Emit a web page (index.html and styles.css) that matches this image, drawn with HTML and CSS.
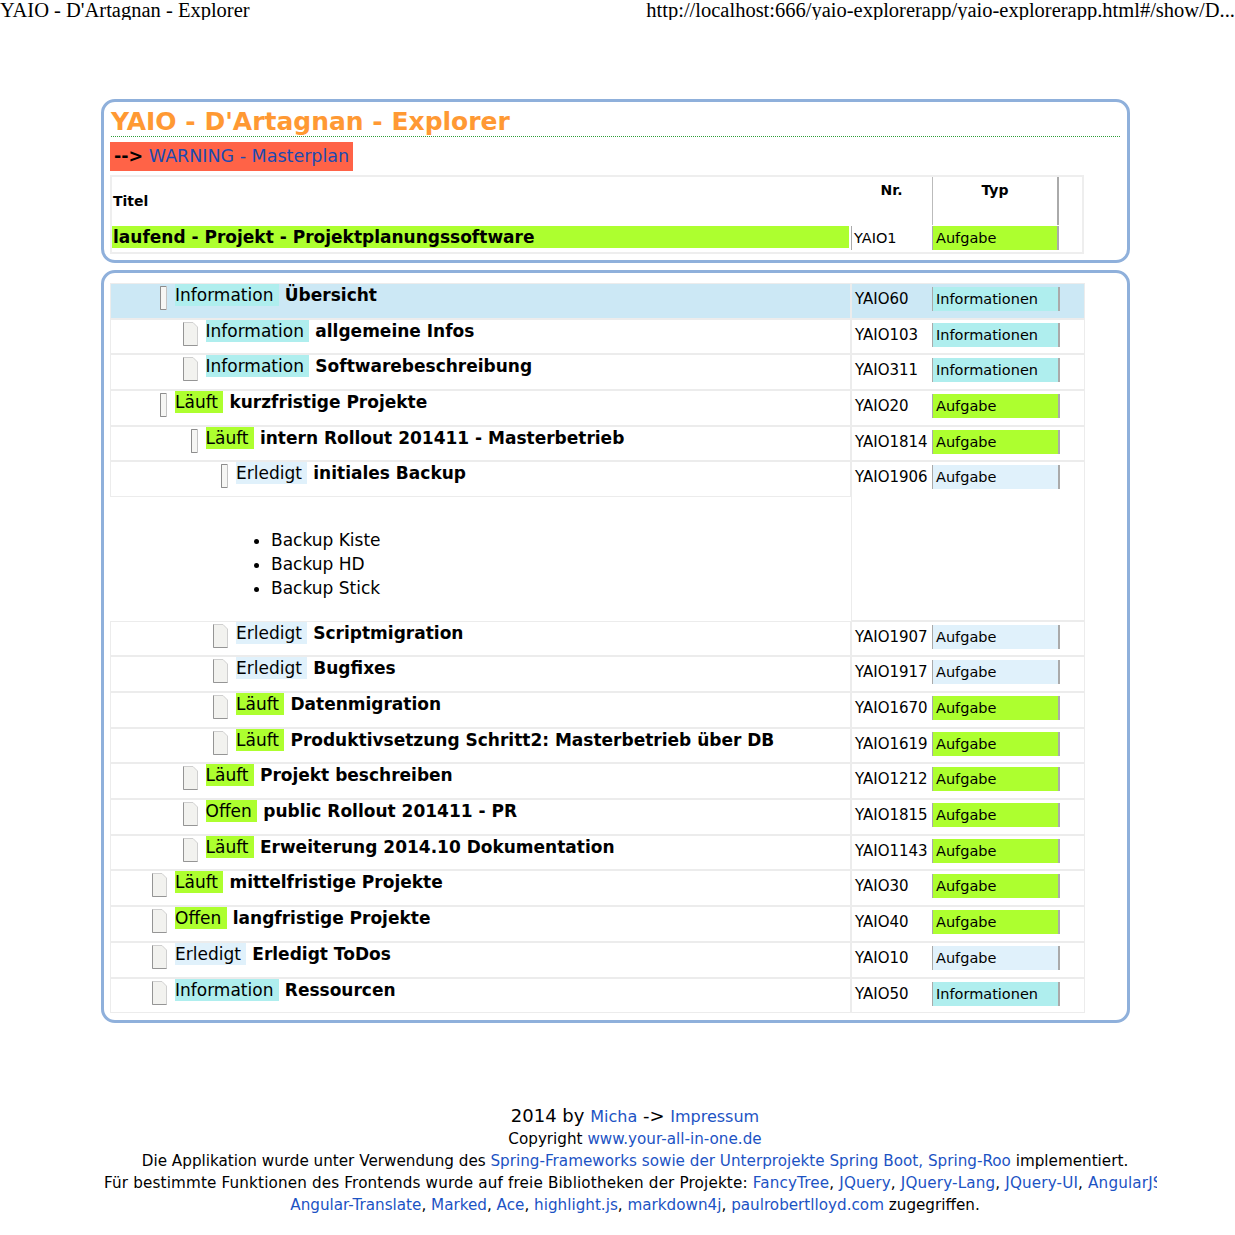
FILE: index.html
```html
<!DOCTYPE html>
<html lang="de">
<head>
<meta charset="utf-8">
<title>YAIO - D'Artagnan - Explorer</title>
<link rel="stylesheet" href="styles.css">
</head>
<body>
<div class="printhead"><span>YAIO - D'Artagnan - Explorer</span><span>http://localhost:666/yaio-explorerapp/yaio-explorerapp.html#/show/D...</span></div>

<div class="page">
  <div class="box box-head">
    <h1 class="apptitle">YAIO - D'Artagnan - Explorer</h1>
    <div class="warn"><b>--&gt;</b> <span class="warn-link">WARNING - Masterplan</span></div>
    <div class="master">
      <div class="mh">
        <div class="mh-title">Titel</div>
        <div class="mh-nr">Nr.</div>
        <div class="mh-typ">Typ</div>
      </div>
      <div class="mr">
        <div class="mr-title">laufend - Projekt - Projektplanungssoftware</div>
        <div class="mr-nr">YAIO1</div>
        <div class="mr-typ">Aufgabe</div>
      </div>
    </div>
  </div>

  <div class="box box-tree">
    <div class="row hl">
      <div class="cell-l"><div class="node l1"><span class="ico"><svg width="16" height="24" viewBox="0 0 16 24"><rect x="9.5" y="0.5" width="6" height="23" fill="#f6f6f4" stroke="#c4c4c4"/><path d="M15 0.5 H9.5 V23.5 H15" fill="none" stroke="#8d8d8d"/></svg></span><span class="st s-info">Information&nbsp;</span><b class="tt">Übersicht</b></div></div>
      <div class="cell-r"><span class="nr">YAIO60</span><span class="typ t-info">Informationen</span></div>
    </div>
    <div class="row">
      <div class="cell-l"><div class="node l2"><span class="ico"><svg width="16" height="24" viewBox="0 0 16 24"><path d="M1.5 0.5 H11 L15.5 5 V23.5 H1.5 Z" fill="#f2f2ef" stroke="#cfcfcf"/><path d="M1.5 0.5 V23.5 H15.5" fill="none" stroke="#959595"/></svg></span><span class="st s-info">Information&nbsp;</span><b class="tt">allgemeine Infos</b></div></div>
      <div class="cell-r"><span class="nr">YAIO103</span><span class="typ t-info">Informationen</span></div>
    </div>
    <div class="row">
      <div class="cell-l"><div class="node l2"><span class="ico"><svg width="16" height="24" viewBox="0 0 16 24"><path d="M1.5 0.5 H11 L15.5 5 V23.5 H1.5 Z" fill="#f2f2ef" stroke="#cfcfcf"/><path d="M1.5 0.5 V23.5 H15.5" fill="none" stroke="#959595"/></svg></span><span class="st s-info">Information&nbsp;</span><b class="tt">Softwarebeschreibung</b></div></div>
      <div class="cell-r"><span class="nr">YAIO311</span><span class="typ t-info">Informationen</span></div>
    </div>
    <div class="row">
      <div class="cell-l"><div class="node l1"><span class="ico"><svg width="16" height="24" viewBox="0 0 16 24"><rect x="9.5" y="0.5" width="6" height="23" fill="#f6f6f4" stroke="#c4c4c4"/><path d="M15 0.5 H9.5 V23.5 H15" fill="none" stroke="#8d8d8d"/></svg></span><span class="st s-run">Läuft&nbsp;</span><b class="tt">kurzfristige Projekte</b></div></div>
      <div class="cell-r"><span class="nr">YAIO20</span><span class="typ t-task">Aufgabe</span></div>
    </div>
    <div class="row">
      <div class="cell-l"><div class="node l2"><span class="ico"><svg width="16" height="24" viewBox="0 0 16 24"><rect x="9.5" y="0.5" width="6" height="23" fill="#f6f6f4" stroke="#c4c4c4"/><path d="M15 0.5 H9.5 V23.5 H15" fill="none" stroke="#8d8d8d"/></svg></span><span class="st s-run">Läuft&nbsp;</span><b class="tt">intern Rollout 201411 - Masterbetrieb</b></div></div>
      <div class="cell-r"><span class="nr">YAIO1814</span><span class="typ t-task">Aufgabe</span></div>
    </div>
    <div class="row">
      <div class="cell-l plain">
        <div class="node l3 framed"><span class="ico"><svg width="16" height="24" viewBox="0 0 16 24"><rect x="9.5" y="0.5" width="6" height="23" fill="#f6f6f4" stroke="#c4c4c4"/><path d="M15 0.5 H9.5 V23.5 H15" fill="none" stroke="#8d8d8d"/></svg></span><span class="st s-done">Erledigt&nbsp;</span><b class="tt">initiales Backup</b></div>
        <div class="desc">
          <ul>
            <li>Backup Kiste</li>
            <li>Backup HD</li>
            <li>Backup Stick</li>
          </ul>
        </div>
      </div>
      <div class="cell-r tall"><span class="nr">YAIO1906</span><span class="typ t-done">Aufgabe</span></div>
    </div>
    <div class="row">
      <div class="cell-l"><div class="node l3"><span class="ico"><svg width="16" height="24" viewBox="0 0 16 24"><path d="M1.5 0.5 H11 L15.5 5 V23.5 H1.5 Z" fill="#f2f2ef" stroke="#cfcfcf"/><path d="M1.5 0.5 V23.5 H15.5" fill="none" stroke="#959595"/></svg></span><span class="st s-done">Erledigt&nbsp;</span><b class="tt">Scriptmigration</b></div></div>
      <div class="cell-r"><span class="nr">YAIO1907</span><span class="typ t-done">Aufgabe</span></div>
    </div>
    <div class="row">
      <div class="cell-l"><div class="node l3"><span class="ico"><svg width="16" height="24" viewBox="0 0 16 24"><path d="M1.5 0.5 H11 L15.5 5 V23.5 H1.5 Z" fill="#f2f2ef" stroke="#cfcfcf"/><path d="M1.5 0.5 V23.5 H15.5" fill="none" stroke="#959595"/></svg></span><span class="st s-done">Erledigt&nbsp;</span><b class="tt">Bugfixes</b></div></div>
      <div class="cell-r"><span class="nr">YAIO1917</span><span class="typ t-done">Aufgabe</span></div>
    </div>
    <div class="row">
      <div class="cell-l"><div class="node l3"><span class="ico"><svg width="16" height="24" viewBox="0 0 16 24"><path d="M1.5 0.5 H11 L15.5 5 V23.5 H1.5 Z" fill="#f2f2ef" stroke="#cfcfcf"/><path d="M1.5 0.5 V23.5 H15.5" fill="none" stroke="#959595"/></svg></span><span class="st s-run">Läuft&nbsp;</span><b class="tt">Datenmigration</b></div></div>
      <div class="cell-r"><span class="nr">YAIO1670</span><span class="typ t-task">Aufgabe</span></div>
    </div>
    <div class="row">
      <div class="cell-l"><div class="node l3"><span class="ico"><svg width="16" height="24" viewBox="0 0 16 24"><path d="M1.5 0.5 H11 L15.5 5 V23.5 H1.5 Z" fill="#f2f2ef" stroke="#cfcfcf"/><path d="M1.5 0.5 V23.5 H15.5" fill="none" stroke="#959595"/></svg></span><span class="st s-run">Läuft&nbsp;</span><b class="tt">Produktivsetzung Schritt2: Masterbetrieb über DB</b></div></div>
      <div class="cell-r"><span class="nr">YAIO1619</span><span class="typ t-task">Aufgabe</span></div>
    </div>
    <div class="row">
      <div class="cell-l"><div class="node l2"><span class="ico"><svg width="16" height="24" viewBox="0 0 16 24"><path d="M1.5 0.5 H11 L15.5 5 V23.5 H1.5 Z" fill="#f2f2ef" stroke="#cfcfcf"/><path d="M1.5 0.5 V23.5 H15.5" fill="none" stroke="#959595"/></svg></span><span class="st s-run">Läuft&nbsp;</span><b class="tt">Projekt beschreiben</b></div></div>
      <div class="cell-r"><span class="nr">YAIO1212</span><span class="typ t-task">Aufgabe</span></div>
    </div>
    <div class="row">
      <div class="cell-l"><div class="node l2"><span class="ico"><svg width="16" height="24" viewBox="0 0 16 24"><path d="M1.5 0.5 H11 L15.5 5 V23.5 H1.5 Z" fill="#f2f2ef" stroke="#cfcfcf"/><path d="M1.5 0.5 V23.5 H15.5" fill="none" stroke="#959595"/></svg></span><span class="st s-open">Offen&nbsp;</span><b class="tt">public Rollout 201411 - PR</b></div></div>
      <div class="cell-r"><span class="nr">YAIO1815</span><span class="typ t-task">Aufgabe</span></div>
    </div>
    <div class="row">
      <div class="cell-l"><div class="node l2"><span class="ico"><svg width="16" height="24" viewBox="0 0 16 24"><path d="M1.5 0.5 H11 L15.5 5 V23.5 H1.5 Z" fill="#f2f2ef" stroke="#cfcfcf"/><path d="M1.5 0.5 V23.5 H15.5" fill="none" stroke="#959595"/></svg></span><span class="st s-run">Läuft&nbsp;</span><b class="tt">Erweiterung 2014.10 Dokumentation</b></div></div>
      <div class="cell-r"><span class="nr">YAIO1143</span><span class="typ t-task">Aufgabe</span></div>
    </div>
    <div class="row">
      <div class="cell-l"><div class="node l1"><span class="ico"><svg width="16" height="24" viewBox="0 0 16 24"><path d="M1.5 0.5 H11 L15.5 5 V23.5 H1.5 Z" fill="#f2f2ef" stroke="#cfcfcf"/><path d="M1.5 0.5 V23.5 H15.5" fill="none" stroke="#959595"/></svg></span><span class="st s-run">Läuft&nbsp;</span><b class="tt">mittelfristige Projekte</b></div></div>
      <div class="cell-r"><span class="nr">YAIO30</span><span class="typ t-task">Aufgabe</span></div>
    </div>
    <div class="row">
      <div class="cell-l"><div class="node l1"><span class="ico"><svg width="16" height="24" viewBox="0 0 16 24"><path d="M1.5 0.5 H11 L15.5 5 V23.5 H1.5 Z" fill="#f2f2ef" stroke="#cfcfcf"/><path d="M1.5 0.5 V23.5 H15.5" fill="none" stroke="#959595"/></svg></span><span class="st s-open">Offen&nbsp;</span><b class="tt">langfristige Projekte</b></div></div>
      <div class="cell-r"><span class="nr">YAIO40</span><span class="typ t-task">Aufgabe</span></div>
    </div>
    <div class="row">
      <div class="cell-l"><div class="node l1"><span class="ico"><svg width="16" height="24" viewBox="0 0 16 24"><path d="M1.5 0.5 H11 L15.5 5 V23.5 H1.5 Z" fill="#f2f2ef" stroke="#cfcfcf"/><path d="M1.5 0.5 V23.5 H15.5" fill="none" stroke="#959595"/></svg></span><span class="st s-done">Erledigt&nbsp;</span><b class="tt">Erledigt ToDos</b></div></div>
      <div class="cell-r"><span class="nr">YAIO10</span><span class="typ t-done">Aufgabe</span></div>
    </div>
    <div class="row">
      <div class="cell-l"><div class="node l1"><span class="ico"><svg width="16" height="24" viewBox="0 0 16 24"><path d="M1.5 0.5 H11 L15.5 5 V23.5 H1.5 Z" fill="#f2f2ef" stroke="#cfcfcf"/><path d="M1.5 0.5 V23.5 H15.5" fill="none" stroke="#959595"/></svg></span><span class="st s-info">Information&nbsp;</span><b class="tt">Ressourcen</b></div></div>
      <div class="cell-r"><span class="nr">YAIO50</span><span class="typ t-info">Informationen</span></div>
    </div>
  </div>
</div>

<div class="footer">
  <div class="f1">2014 by <a class="fl" href="#">Micha</a> -&gt; <a class="fl" href="#">Impressum</a></div>
  <div>Copyright <a href="#">www.your-all-in-one.de</a></div>
  <div>Die Applikation wurde unter Verwendung des <a href="#">Spring-Frameworks sowie der Unterprojekte Spring Boot, Spring-Roo</a> implementiert.</div>
  <div class="f4">Für bestimmte Funktionen des Frontends wurde auf freie Bibliotheken der Projekte: <a href="#">FancyTree</a>, <a href="#">JQuery</a>, <a href="#">JQuery-Lang</a>, <a href="#">JQuery-UI</a>, <a href="#">AngularJS</a>,</div>
  <div><a href="#">Angular-Translate</a>, <a href="#">Marked</a>, <a href="#">Ace</a>, <a href="#">highlight.js</a>, <a href="#">markdown4j</a>, <a href="#">paulrobertlloyd.com</a> zugegriffen.</div>
</div>
</body>
</html>
```
FILE: styles.css
```css
* { box-sizing: border-box; }
body {
  margin: 0;
  font-family: "DejaVu Sans", Verdana, sans-serif;
  color: #000;
  background: #fff;
}
.printhead {
  display: flex;
  justify-content: space-between;
  font-family: "Liberation Serif", "Times New Roman", serif;
  font-size: 20.5px;
  line-height: 20px;
  white-space: nowrap;
  overflow: hidden;
}
.page {
  width: 1029px;
  margin: 79px 0 0 101px;
}
.box {
  border: 3px solid #8fb0db;
  border-radius: 14px;
}
.box-head {
  padding: 6px 7px 6px 6px;
}
.apptitle {
  margin: 0 0 0 1px;
  width: 1009px;
  font-size: 25px;
  line-height: 28px;
  font-weight: bold;
  color: #ff9933;
  border-bottom: 1px dotted #2f9e3a;
}
.warn {
  display: inline-block;
  margin-top: 5px;
  background: #ff6347;
  font-size: 17.5px;
  line-height: 29px;
  padding: 0 4px;
}
.warn-link { color: #1b4ab0; }
.master {
  margin-top: 4px;
  width: 974px;
  border: 2px solid #eeeeee;
  padding-bottom: 2px;
}
.mh { display: flex; height: 48px; }
.mh-title {
  width: 739px;
  font-weight: bold;
  font-size: 14px;
  display: flex;
  align-items: center;
  padding-left: 1px;
}
.mh-nr {
  width: 81px;
  text-align: center;
  font-weight: bold;
  font-size: 14px;
  padding-top: 5px;
}
.mh-typ {
  width: 127px;
  border-left: 1px solid #bbbbbb;
  border-right: 2px solid #aaaaaa;
  text-align: center;
  font-weight: bold;
  font-size: 14px;
  padding-top: 5px;
}
.mr { display: flex; height: 24px; margin-top: 1px; }
.mr-title {
  width: 737px;
  margin-right: 2px;
  height: 22px;
  background: #adff2f;
  font-weight: bold;
  font-size: 17px;
  line-height: 22px;
  padding-left: 1px;
}
.mr-nr {
  width: 81px;
  border-left: 1px solid #aaaaaa;
  font-size: 14.5px;
  line-height: 24px;
  padding-left: 2px;
}
.mr-typ {
  width: 127px;
  background: #adff2f;
  border-left: 1px solid #aaaaaa;
  border-right: 2px solid #aaaaaa;
  font-size: 14.5px;
  line-height: 24px;
  padding-left: 3px;
}
.box-tree {
  margin-top: 7px;
  padding: 10px 0 7px 6px;
}
.row { display: flex; }
.cell-l {
  width: 741px;
  height: 35.7px;
  border: 1px solid #ececec;
}
.cell-l.plain { border: none; height: auto; }
.framed {
  border: 1px solid #ececec;
  height: 35.7px;
}
.cell-r {
  width: 234px;
  height: 35.7px;
  border: 1px solid #ececec;
  padding: 3px 0 0 3px;
  display: flex;
  align-items: flex-start;
}
.cell-r.tall { height: auto; }
.row.hl .cell-l, .row.hl .cell-r { background: #cce8f5; }
.node {
  display: flex;
  align-items: flex-start;
  white-space: nowrap;
}
.l1 { padding-left: 40px; }
.l2 { padding-left: 70.5px; }
.l3 { padding-left: 101px; }
.ico {
  width: 16px;
  height: 24px;
  margin: 2px 8px 0 0;
  display: block;
}
.ico svg { display: block; }
.st {
  font-size: 17px;
  line-height: 22px;
  margin-right: 6px;
}
.tt {
  font-size: 17px;
  line-height: 22px;
  font-weight: bold;
}
.s-info { background: #afeeee; }
.s-run, .s-open { background: #adff2f; }
.s-done { background: #e0f1fb; }
.nr {
  width: 77px;
  font-size: 15px;
  line-height: 24px;
}
.typ {
  width: 128px;
  height: 24px;
  border-left: 1px solid #aaaaaa;
  border-right: 2px solid #aaaaaa;
  padding-left: 3px;
  font-size: 14.5px;
  line-height: 24px;
}
.t-info { background: #afeeee; }
.t-task { background: #adff2f; }
.t-done { background: #e0f1fb; }
.desc {
  height: 123.5px;
  padding-top: 31px;
}
.desc ul {
  margin: 0;
  padding-left: 161px;
  font-size: 17px;
  line-height: 24px;
}
.footer {
  margin: 82px 0 0 104px;
  width: 1062px;
  text-align: center;
  font-size: 15.2px;
  line-height: 22px;
}
.footer a { color: #1c53c4; text-decoration: none; }
.f1 { font-size: 18px; }
.f1 .fl { font-size: 16px; }
.f4 {
  width: 1053px;
  white-space: nowrap;
  overflow: hidden;
  letter-spacing: 0.15px;
}
```
